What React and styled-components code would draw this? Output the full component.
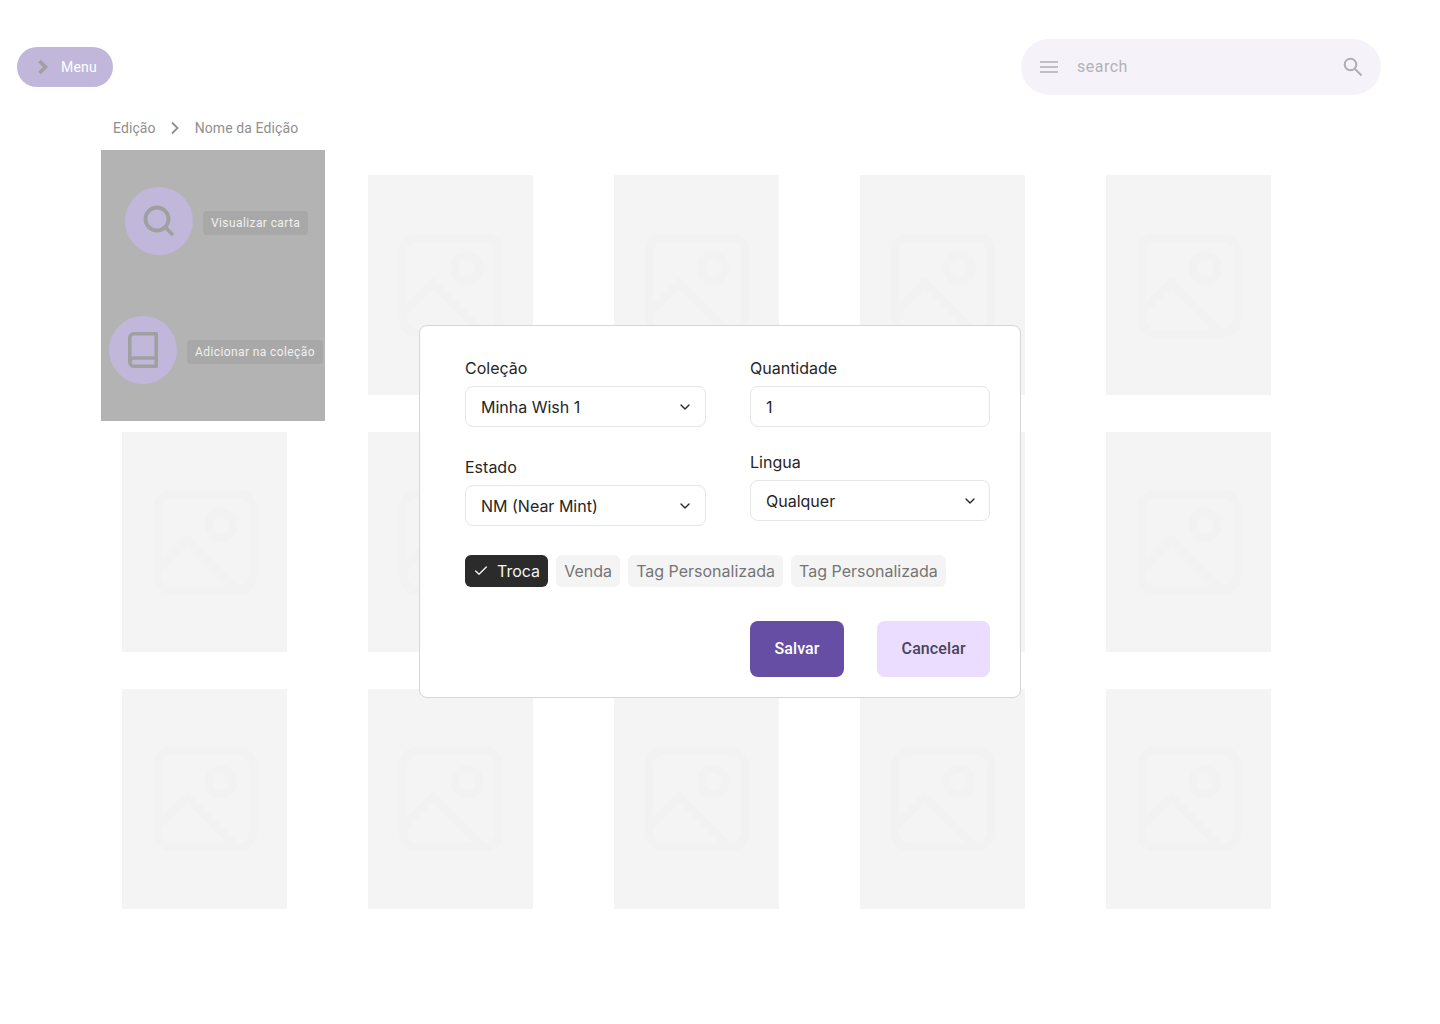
import React from 'react';
import styled, { createGlobalStyle } from 'styled-components';
import { ChevronDown, Check } from 'lucide-react';

const GlobalStyle = createGlobalStyle`
  html, body {
    margin: 0;
    padding: 0;
    background: #fff;
    font-family: Roboto, "Liberation Sans", sans-serif;
  }
  * { box-sizing: border-box; }
`;

const App = () => (
  <Page>
    <GlobalStyle />
    <Header>
      <MenuButton>
        <MenuArrow viewBox="0 0 12 16">
          <path d="M2.5 2L8.5 8l-6 6" />
        </MenuArrow>
        Menu
      </MenuButton>
      <SearchBar>
        <BarsIcon viewBox="0 0 18 12">
          <path d="M0 1h18M0 6h18M0 11h18" />
        </BarsIcon>
        <SearchText>search</SearchText>
        <SearchIcon viewBox="0 0 20 20">
          <circle cx="7.5" cy="7.5" r="5.8" />
          <path d="M12 12l6.5 6.5" />
        </SearchIcon>
      </SearchBar>
    </Header>

    <Breadcrumb>
      <span>Edição</span>
      <CrumbArrow viewBox="0 0 10 14">
        <path d="M2 1.5L7.5 7 2 12.5" />
      </CrumbArrow>
      <span>Nome da Edição</span>
    </Breadcrumb>

    <CardGrid>
      {Array.from({ length: 15 }).map((_, i) => (
        <Card key={i}>
          <PlaceholderIcon viewBox="0 0 104 104">
            <rect x="4" y="4" width="96" height="96" rx="14" />
            <circle cx="68" cy="35" r="12.5" />
            <path d="M4 80l30-30 50 50" />
          </PlaceholderIcon>
        </Card>
      ))}
      <HoverLayer>
        <HoverAction $left={24} $top={37}>
          <ActionCircle>
            <svg width="36" height="36" viewBox="0 0 36 36" fill="none" stroke="#a0a0a0" strokeWidth="3.8" strokeLinecap="round">
              <circle cx="16" cy="16" r="11.5" />
              <path d="M24.5 24.5L31 31" />
            </svg>
          </ActionCircle>
          <ActionLabel>Visualizar carta</ActionLabel>
        </HoverAction>
        <HoverAction $left={8} $top={166}>
          <ActionCircle>
            <svg width="30" height="36" viewBox="0 0 30 36" fill="none" stroke="#a0a0a0" strokeWidth="3.6" strokeLinejoin="round" strokeLinecap="round">
              <path d="M5.8 1.8h22.4v32.4H5.8a4 4 0 0 1-4-4V5.8a4 4 0 0 1 4-4z" />
              <path d="M1.8 30a4 4 0 0 1 4-4h22.4" />
            </svg>
          </ActionCircle>
          <ActionLabel>Adicionar na coleção</ActionLabel>
        </HoverAction>
      </HoverLayer>
    </CardGrid>

    <Modal>
      <FieldColumns>
        <FieldColumn $gap={31}>
          <Field>
            <FieldLabel>Coleção</FieldLabel>
            <FieldBox>
              Minha Wish 1
              <ChevronDown size={16} strokeWidth={2} />
            </FieldBox>
          </Field>
          <Field>
            <FieldLabel>Estado</FieldLabel>
            <FieldBox>
              NM (Near Mint)
              <ChevronDown size={16} strokeWidth={2} />
            </FieldBox>
          </Field>
        </FieldColumn>
        <FieldColumn $gap={26}>
          <Field>
            <FieldLabel>Quantidade</FieldLabel>
            <FieldBox>1</FieldBox>
          </Field>
          <Field>
            <FieldLabel>Lingua</FieldLabel>
            <FieldBox>
              Qualquer
              <ChevronDown size={16} strokeWidth={2} />
            </FieldBox>
          </Field>
        </FieldColumn>
      </FieldColumns>

      <TagRow>
        <Tag $active>
          <Check size={16} strokeWidth={2} />
          Troca
        </Tag>
        <Tag>Venda</Tag>
        <Tag>Tag Personalizada</Tag>
        <Tag>Tag Personalizada</Tag>
      </TagRow>

      <ButtonRow>
        <ModalButton $primary>Salvar</ModalButton>
        <ModalButton>Cancelar</ModalButton>
      </ButtonRow>
    </Modal>
  </Page>
);

const Page = styled.div`
  position: relative;
  width: 1440px;
  height: 1024px;
  overflow: hidden;
  background: #fff;
`;

const Header = styled.header`
  display: flex;
  align-items: center;
  justify-content: space-between;
  height: 56px;
  margin-top: 39px;
  padding: 0 59px 0 17px;
`;

const MenuButton = styled.button`
  display: flex;
  align-items: center;
  width: 96px;
  height: 40px;
  padding: 0 0 0 20px;
  border: 0;
  border-radius: 20px;
  background: #c1b7da;
  color: #fff;
  font-family: Roboto, sans-serif;
  font-size: 14px;
  font-weight: 400;
  letter-spacing: 0.2px;
`;

const MenuArrow = styled.svg`
  width: 12px;
  height: 16px;
  margin-right: 12px;
  fill: none;
  stroke: #a0a0a0;
  stroke-width: 3.6;
`;

const SearchBar = styled.div`
  display: flex;
  align-items: center;
  width: 360px;
  height: 56px;
  padding: 0 18px 0 19px;
  border-radius: 28px;
  background: #f5f3f9;
`;

const BarsIcon = styled.svg`
  width: 18px;
  height: 12px;
  fill: none;
  stroke: #b0aeb5;
  stroke-width: 1.6;
`;

const SearchText = styled.span`
  flex: 1;
  margin-left: 19px;
  padding-bottom: 1px;
  color: #b3b1b8;
  font-size: 16px;
  letter-spacing: 0.5px;
`;

const SearchIcon = styled.svg`
  width: 20px;
  height: 20px;
  fill: none;
  stroke: #b0aeb5;
  stroke-width: 2;
`;

const Breadcrumb = styled.nav`
  display: flex;
  align-items: center;
  height: 20px;
  margin-top: 23px;
  padding-left: 113px;
  color: #8f8f8f;
  font-size: 14px;
  font-weight: 400;
  line-height: 20px;
  letter-spacing: 0.1px;
`;

const CrumbArrow = styled.svg`
  width: 10px;
  height: 14px;
  margin: 0 14.5px;
  fill: none;
  stroke: #8f8f8f;
  stroke-width: 1.8;
`;

const CardGrid = styled.section`
  position: relative;
  display: grid;
  grid-template-columns: repeat(5, 165px);
  grid-auto-rows: 220px;
  column-gap: 81px;
  row-gap: 37px;
  margin-top: 37px;
  padding-left: 122px;
`;

const Card = styled.div`
  display: flex;
  align-items: flex-start;
  justify-content: center;
  padding-top: 58px;
  background: #f4f4f4;
`;

const PlaceholderIcon = styled.svg`
  width: 104px;
  height: 104px;
  fill: none;
  stroke: #f2f2f2;
  stroke-width: 8;
`;

const HoverLayer = styled.div`
  position: absolute;
  top: -25px;
  left: 101px;
  width: 224px;
  height: 271px;
  background: #b3b3b3;
`;

const HoverAction = styled.div`
  position: absolute;
  top: ${(p) => p.$top}px;
  left: ${(p) => p.$left}px;
  display: flex;
  align-items: center;
  gap: 10px;
`;

const ActionCircle = styled.div`
  display: flex;
  align-items: center;
  justify-content: center;
  width: 68px;
  height: 68px;
  border-radius: 50%;
  background: #c1b7da;
`;

const ActionLabel = styled.span`
  margin-top: 3px;
  padding: 4px 8px;
  border-radius: 4px;
  background: #a8a8a8;
  color: #f0f0f0;
  font-size: 12px;
  line-height: 16px;
  letter-spacing: 0.4px;
  white-space: nowrap;
`;

const Modal = styled.div`
  position: absolute;
  top: 325px;
  left: 419px;
  width: 602px;
  height: 373px;
  padding: 33px 30px 0 45px;
  border: 1px solid #d6d6d6;
  border-radius: 8px;
  background: #fff;
  font-family: Inter, sans-serif;
`;

const FieldColumns = styled.div`
  display: grid;
  grid-template-columns: 240.5px 240px;
  column-gap: 44.5px;
`;

const FieldColumn = styled.div`
  display: flex;
  flex-direction: column;
  gap: ${(p) => p.$gap}px;
`;

const Field = styled.div`
  display: flex;
  flex-direction: column;
  gap: 8px;
`;

const FieldLabel = styled.label`
  color: #262626;
  font-size: 16px;
  line-height: 19px;
`;

const FieldBox = styled.div`
  display: flex;
  align-items: center;
  justify-content: space-between;
  height: 41px;
  padding: 0 11.5px 0 15px;
  border: 1.5px solid #e6e6e6;
  border-radius: 8px;
  background: #fff;
  color: #262626;
  font-size: 16px;
`;

const TagRow = styled.div`
  display: flex;
  gap: 8px;
  margin-top: 29px;
`;

const Tag = styled.span`
  display: flex;
  align-items: center;
  gap: 8px;
  height: 32px;
  padding: 0 8.15px 0 8px;
  border-radius: 6px;
  background: ${(p) => (p.$active ? '#2b2b2b' : '#f4f4f4')};
  color: ${(p) => (p.$active ? '#f4f4f4' : '#757575')};
  font-size: 16px;
`;

const ButtonRow = styled.div`
  display: flex;
  gap: 33px;
  margin-top: 34px;
  padding-left: 285px;
`;

const ModalButton = styled.button`
  height: 56px;
  padding: 0 24.5px 2px;
  border: 0;
  border-radius: 8px;
  background: ${(p) => (p.$primary ? '#654ea3' : '#eaddff')};
  color: ${(p) => (p.$primary ? '#fff' : '#4a4458')};
  font-family: Roboto, sans-serif;
  font-size: 16px;
  font-weight: 500;
  letter-spacing: 0.1px;
`;

export default App;
